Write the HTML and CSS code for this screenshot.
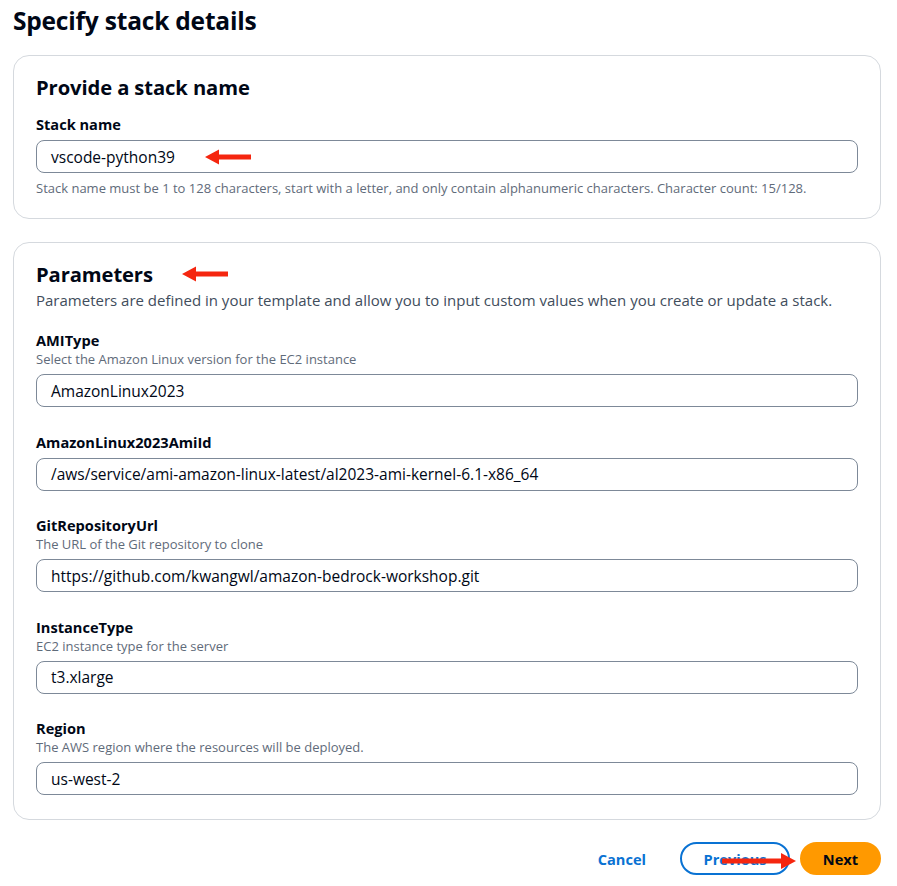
FILE: index.html
```html
<!DOCTYPE html>
<html lang="en">
<head>
<meta charset="utf-8">
<title>Specify stack details</title>
<link rel="stylesheet" href="styles.css">
</head>
<body>
<div class="page">
  <h1 class="page-title">Specify stack details</h1>

  <section class="card">
    <h2 class="card-title">Provide a stack name</h2>
    <div class="field field-first">
      <div class="label">Stack name</div>
      <div class="input">vscode-python39</div>
      <div class="help">Stack name must be 1 to 128 characters, start with a letter, and only contain alphanumeric characters. Character count: 15/128.</div>
    </div>
  </section>

  <section class="card">
    <h2 class="card-title">Parameters</h2>
    <p class="card-desc">Parameters are defined in your template and allow you to input custom values when you create or update a stack.</p>

    <div class="field">
      <div class="label">AMIType</div>
      <div class="desc">Select the Amazon Linux version for the EC2 instance</div>
      <div class="input">AmazonLinux2023</div>
    </div>

    <div class="field">
      <div class="label">AmazonLinux2023AmiId</div>
      <div class="input">/aws/service/ami-amazon-linux-latest/al2023-ami-kernel-6.1-x86_64</div>
    </div>

    <div class="field">
      <div class="label">GitRepositoryUrl</div>
      <div class="desc">The URL of the Git repository to clone</div>
      <div class="input">https://github.com/kwangwl/amazon-bedrock-workshop.git</div>
    </div>

    <div class="field">
      <div class="label">InstanceType</div>
      <div class="desc">EC2 instance type for the server</div>
      <div class="input">t3.xlarge</div>
    </div>

    <div class="field">
      <div class="label">Region</div>
      <div class="desc">The AWS region where the resources will be deployed.</div>
      <div class="input">us-west-2</div>
    </div>
  </section>

  <div class="actions">
    <button class="btn btn-link">Cancel</button>
    <button class="btn btn-normal">Previous</button>
    <button class="btn btn-primary">Next</button>
  </div>

  <svg class="arrow arrow-stack" width="46" height="16" viewBox="0 0 46 16"><path d="M0 8 L14 0.5 L14 5.5 L46 5.5 L46 10.5 L14 10.5 L14 15.5 Z" fill="#f5260f"/></svg>
  <svg class="arrow arrow-params" width="46" height="16" viewBox="0 0 46 16"><path d="M0 8 L14 0.5 L14 5.5 L46 5.5 L46 10.5 L14 10.5 L14 15.5 Z" fill="#f5260f"/></svg>
  <svg class="arrow arrow-next" width="74" height="18" viewBox="0 0 74 18"><path d="M74 9 L59 1 L59 6.5 L0 6.5 L0 11.5 L59 11.5 L59 17 Z" fill="#f5260f"/></svg>
</div>
</body>
</html>
```

FILE: styles.css
```css
* { box-sizing: border-box; }

html, body {
  margin: 0;
  padding: 0;
  background: #ffffff;
}

body {
  font-family: "Open Sans", "Noto Sans", Arial, sans-serif;
  color: #000716;
  font-size: 15px;
  line-height: 20px;
}

.page {
  position: relative;
  width: 881px;
  padding: 5px 0 0 13px;
}

.page-title {
  margin: 0;
  font-size: 24.5px;
  line-height: 32px;
  font-weight: 700;
  letter-spacing: -0.2px;
}

.card {
  margin-top: 18px;
  border: 1px solid #d5d9de;
  border-radius: 16px;
  padding: 17px 22px 21px;
}

.card + .card {
  margin-top: 23px;
  padding-bottom: 24px;
}

.card-title {
  margin: 0;
  font-size: 20.2px;
  line-height: 28px;
  font-weight: 700;
  letter-spacing: -0.1px;
}

.card-desc {
  margin: 2px 0 0;
  font-size: 15px;
  line-height: 20px;
  color: #414d5c;
}

.field {
  margin-top: 24.5px;
}

.card-desc + .field {
  margin-top: 20px;
}

.field-first {
  margin-top: 13px;
}

.label {
  font-size: 14.6px;
  line-height: 20px;
  font-weight: 700;
}

.desc {
  font-size: 13px;
  line-height: 18px;
  color: #5f6b7a;
}

.input {
  margin-top: 6px;
  height: 33px;
  border: 1.5px solid #7d8998;
  border-radius: 8px;
  padding: 0 14px;
  display: flex;
  align-items: center;
  font-size: 15.5px;
  color: #000716;
  white-space: nowrap;
}

.help {
  margin-top: 6px;
  font-size: 13px;
  line-height: 18px;
  color: #5f6b7a;
}

.actions {
  margin-top: 22px;
  display: flex;
  justify-content: flex-end;
  align-items: center;
  gap: 10px;
}

.btn {
  font-family: inherit;
  font-size: 14.6px;
  font-weight: 700;
  line-height: 20px;
  height: 33px;
  border-radius: 20px;
  padding: 0 18px;
  cursor: pointer;
}

.btn-link {
  background: none;
  border: 2px solid transparent;
  color: #0972d3;
  margin-right: 4px;
}

.btn-normal {
  background: #ffffff;
  border: 2px solid #0972d3;
  color: #0972d3;
  width: 110px;
}

.btn-primary {
  background: #ff9900;
  border: 2px solid #ff9900;
  color: #000716;
  width: 81px;
}

.arrow {
  position: absolute;
  display: block;
}

.arrow-stack { left: 205px; top: 149px; }
.arrow-params { left: 182px; top: 266px; }
.arrow-next { left: 722px; top: 852px; }
```
